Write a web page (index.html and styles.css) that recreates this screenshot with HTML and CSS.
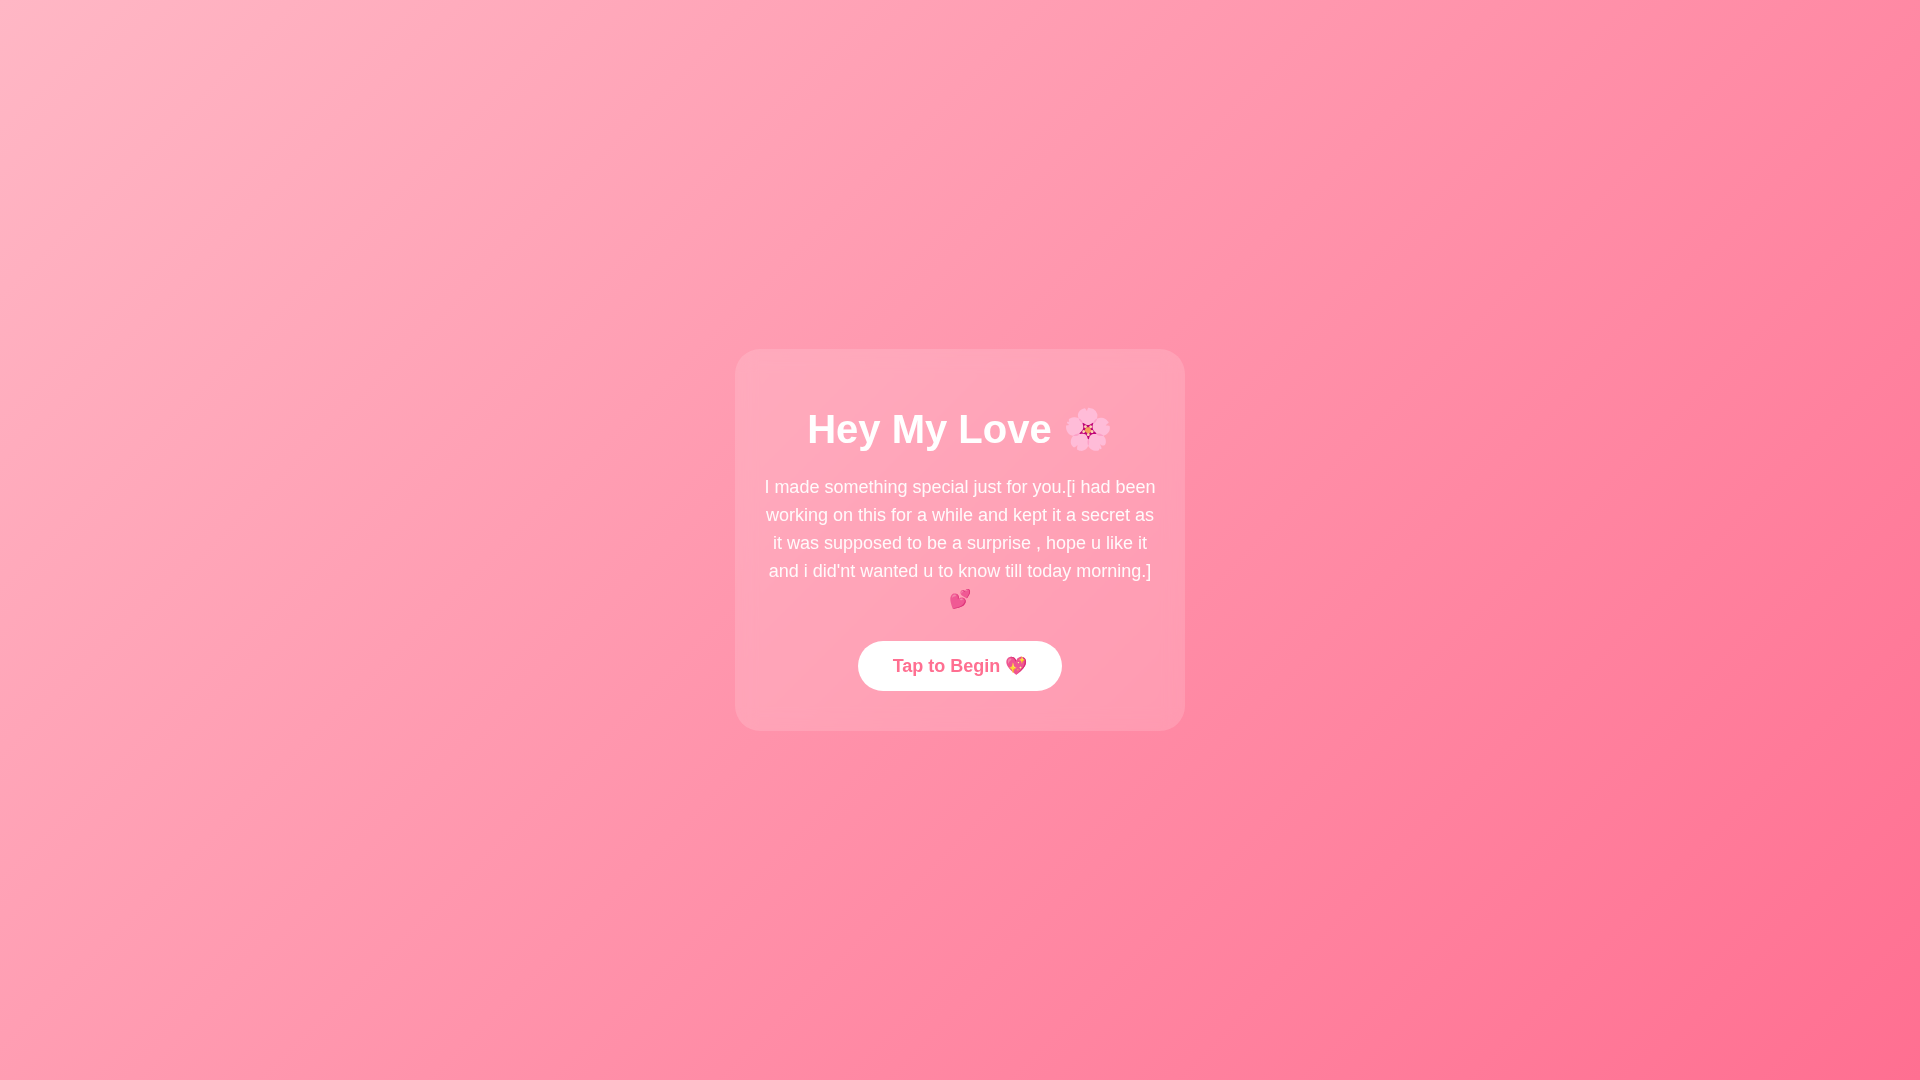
FILE: index.html
```html
<!DOCTYPE html>
<html lang="en">
<head>
    <meta charset="UTF-8">
    <meta name="viewport" content="width=device-width, initial-scale=1.0">
    <title>For You</title>
    <link rel="stylesheet" href="styles.css">
</head>
<body>
    <div class="container">
        <h1>Hey My Love 🌸</h1>
        <p>I made something special just for you.[i had been working on this for a while and kept it a secret as it was supposed to be a surprise , hope u like it and i did'nt wanted u to know till today morning.] 💕</p>
        <button class="start-btn" type="button">Tap to Begin 💖</button>
    </div>
</body>
</html>
```
FILE: styles.css
```css
* {
    box-sizing: border-box;
}

body {
    margin: 0;
    min-height: 100vh;
    display: flex;
    justify-content: center;
    align-items: center;
    font-family: "Liberation Sans", Arial, sans-serif;
    color: white;
    text-align: center;
    background: linear-gradient(135deg, #ffb7c5, #ff6f91);
}

/* Card */
.container {
    width: 90%;
    max-width: 450px;
    padding: 30px 28px 40px;
    border-radius: 25px;
    background: rgba(255, 255, 255, 0.15);
    backdrop-filter: blur(10px);
}

h1 {
    margin: 27px 0 20px;
    font-size: 40px;
}

p {
    margin: 0 0 28px;
    font-size: 18px;
    line-height: 28px;
    opacity: 0.95;
}

.start-btn {
    padding: 14px 35px;
    border: none;
    border-radius: 30px;
    background: white;
    color: #ff6f91;
    font-family: inherit;
    font-size: 18px;
    font-weight: bold;
    cursor: pointer;
}
```
